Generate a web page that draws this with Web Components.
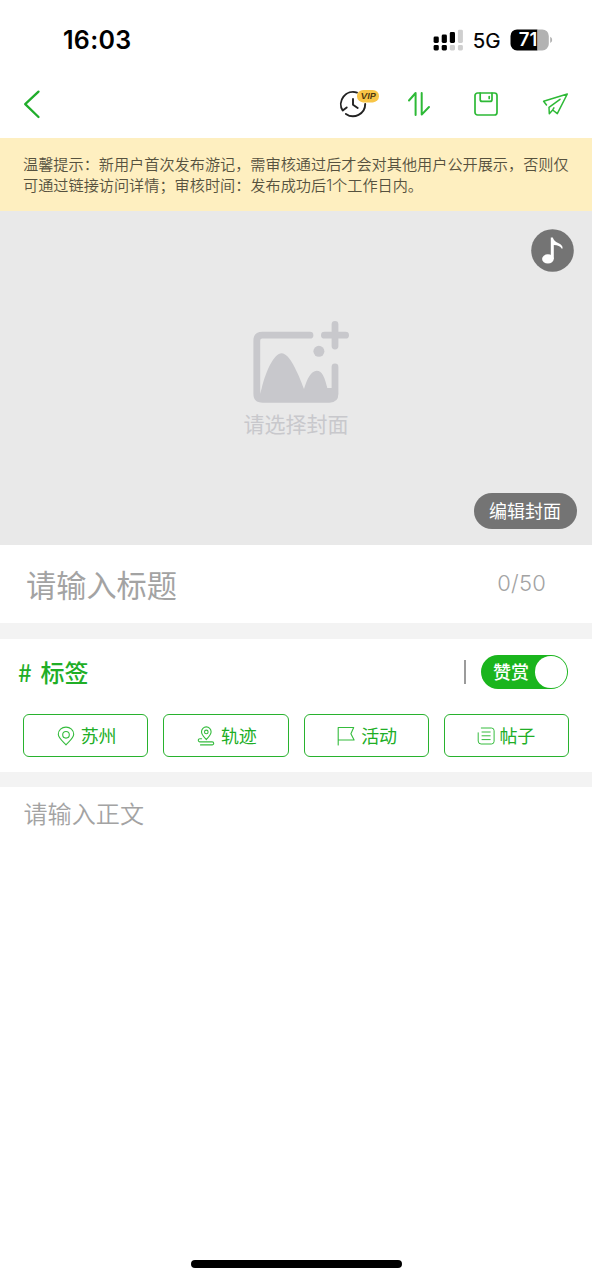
<!DOCTYPE html>
<html lang="zh-CN">
<head>
<meta charset="utf-8">
<title>发布游记</title>
<style>
html,body{margin:0;padding:0;background:#fff}
body{font-family:Inter,"Noto Sans CJK SC",sans-serif;color:#000}
</style>
</head>
<body>
<travel-editor></travel-editor>
<script>
const define = (name, html) => {
  const t = document.createElement('template');
  t.innerHTML = html;
  customElements.define(name, class extends HTMLElement {
    constructor() {
      super();
      this.attachShadow({mode: 'open'}).append(t.content.cloneNode(true));
    }
  });
};

const icons = {
  back: [18, 30, '<path d="M15.5 2.6 2.2 15.2l13.3 12.8" stroke="#20ad2b" stroke-width="2.3"/>'],
  history: [42, 34, `<g stroke="#222" stroke-width="1.9"><path d="M20 5.6A12.2 12.2 0 0 0 5.7 23.6l4-3.2"/><path d="M8.9 26.9A12.2 12.2 0 0 0 28.2 17"/><path d="M16 12v5.7l4.7 3.3"/></g>
    <rect x="20" y="3" width="22" height="12.4" rx="6.2" fill="#f8c547"/>
    <text x="31.2" y="12.2" text-anchor="middle" font-family="Inter,sans-serif" font-size="8" font-weight="600" font-style="italic" textLength="15.5" lengthAdjust="spacingAndGlyphs" fill="#49350e">VIP</text>`],
  sort: [24, 26, '<path d="M2 9.5 8.6 2v22M14.7 2v21.6L22 16" stroke="#2db936" stroke-width="2"/>'],
  save: [26, 26, '<g stroke="#2db936" stroke-width="1.7"><rect x="2" y="2" width="22" height="22" rx="2.6"/><path d="M7.2 2v6.4q0 2 2 2h7.8q2 0 2-2V2M16.2 5.5v2"/></g>'],
  send: [28, 26, '<path d="M4.5 14 1.6 10.3 25.3 3l-10 19.7-4.6-3.7-3.4 3.7-.3-6.4 11-8M10.7 19l1.2-2.2" stroke="#2db936" stroke-width="1.5"/>'],
  music: [43, 43, '<circle cx="21.5" cy="21.5" r="21.3" fill="#747474"/><ellipse cx="16.9" cy="29.9" rx="5.8" ry="4.6" fill="#fff"/><path d="M19.8 8.5h2q1.1 3.7 5.3 5.5 4.6 2 4.5 5.1-.2 1-1 .3-1.8-3.1-7.8-3.5v14.3h-3Z" fill="#fff"/>'],
  picture: [98, 86, `<g stroke="#c8c8cc" stroke-width="6.8"><path d="M58 17.2H10.3Q4.8 17.2 4.8 22.7v53.1q0 5.5 5.5 5.5h67.2q5.5 0 5.5-5.5V48.9"/><path d="M83 6.4V28M72.4 17.2h21.2"/></g>
    <circle cx="66.9" cy="33.3" r="5.5" fill="#c8c8cc"/><path d="M8 76 9.7 70.3C14 53 22 35.3 29.7 35.3S46 55 52 71c3-10 7-18.3 12.7-18.3S73 60 75.3 70H83V82H8Z" fill="#c8c8cc"/>`],
  pin: [18, 20, '<g stroke="#35bc3d" stroke-width="1.1"><path d="M9 18.8C5.8 15.4 1.3 12 1.3 8.3a7.7 7.2 0 0 1 15.4 0C16.7 12 12.2 15.4 9 18.8Z"/><circle cx="9" cy="8.8" r="3.3"/></g>'],
  track: [18, 20, '<g stroke="#35bc3d" stroke-width="1.1"><path d="M9.3 13.6C7.4 11.3 4.5 9 4.5 5.8a4.8 4.9 0 0 1 9.6 0c0 3.2-2.9 5.5-4.8 7.8Z"/><circle cx="9.3" cy="5.9" r="1.8"/><path d="M4.6 12.7H2.9a1.6 1.6 0 0 0 0 3.2h12.3a1.5 1.5 0 0 1 0 3H3.5"/></g>'],
  flag: [18, 20, '<path d="M1.2 19V1.5h15.5l-2.8 6.2 3.2 6.3H1.2" stroke="#35bc3d" stroke-width="1.1"/>'],
  post: [18, 20, '<g stroke="#35bc3d" stroke-width="1"><path d="M4.3 2h10.1q2.7 0 2.7 2.7v10.6q0 2.7-2.7 2.7H4.1Q1.2 18 1.2 15V6.8"/><path d="M5 6h8.2M5 9.8h8.2M5 13.6h8.2"/></g>'],
  signal: [31, 22, '<g fill="#000"><rect x=".6" y="7.5" width="5.2" height="6.5" rx="1.4"/><rect x="8.7" y="5.5" width="5.2" height="8.5" rx="1.4"/><rect x="16.8" y="3" width="5.2" height="11" rx="1.4"/><rect x=".6" y="16.1" width="5.2" height="5.4" rx="1.4"/><rect x="8.7" y="16.1" width="5.2" height="5.4" rx="1.4"/></g><g fill="#cfcfcf"><rect x="24.9" y=".7" width="5" height="13.3" rx="1.4"/><rect x="16.8" y="16.1" width="5.2" height="5.4" rx="1.4"/><rect x="24.9" y="16.1" width="5" height="5.4" rx="1.4"/></g>'],
  battery: [43, 22, `<path d="M27.5.4H7A6.5 6.5 0 0 0 .5 6.9v8A6.5 6.5 0 0 0 7 21.4h20.5Z" fill="#000"/><path d="M27.5.4h4.8a6.5 6.5 0 0 1 6.5 6.5v8a6.5 6.5 0 0 1-6.5 6.5h-4.8ZM40.2 7.8q2 1 2 3.1t-2 3.1Z" fill="#b2b2b2"/>
    <text x="8.8" y="17.4" font-family="Inter,sans-serif" font-size="18.5" font-weight="600" textLength="18.6" lengthAdjust="spacingAndGlyphs" fill="#fff">71</text>`]
};
customElements.define('ui-icon', class extends HTMLElement {
  connectedCallback() {
    if (this.shadowRoot) return;
    const [w, h, art] = icons[this.getAttribute('name')];
    this.attachShadow({mode: 'open'}).innerHTML =
      `<style>:host{display:block;flex:none;width:${w}px;height:${h}px}svg{display:block}</style>
       <svg width="${w}" height="${h}" viewBox="0 0 ${w} ${h}" fill="none" stroke-linecap="round" stroke-linejoin="round">${art}</svg>`;
  }
});

define('status-bar', `<style>
:host{display:flex;box-sizing:border-box;height:80px;padding:0 39.5px 0 63px;align-items:center;justify-content:space-between}
.time{font-size:25px;font-weight:600;line-height:30px;letter-spacing:.3px}
.right{display:flex;align-items:center}
.net{font-size:20.5px;line-height:24px;margin:1px 9px 0 9px;-webkit-text-stroke:.2px #000}
</style><span class="time">16:03</span><div class="right"><ui-icon name="signal"></ui-icon><span class="net">5G</span><ui-icon name="battery"></ui-icon></div>`);

define('nav-bar', `<style>
:host{display:flex;box-sizing:border-box;height:58px;padding:0 22px 10px 23px;align-items:center}
.tools{display:flex;align-items:center;margin-left:auto}
.sort{margin-left:28px}.save{margin-left:42px}.send{margin-left:43px}
</style><ui-icon name="back"></ui-icon><div class="tools"><ui-icon name="history"></ui-icon><ui-icon class="sort" name="sort"></ui-icon><ui-icon class="save" name="save"></ui-icon><ui-icon class="send" name="send"></ui-icon></div>`);

define('notice-bar', `<style>
:host{display:block;box-sizing:border-box;height:73px;padding:16px 20px 0 23px;background:#feefc0;color:#56523f;font-size:15.17px;font-weight:350;line-height:21.3px;white-space:nowrap}
</style><slot></slot>`);

define('cover-picker', `<style>
:host{display:flex;flex-direction:column;box-sizing:border-box;height:333.5px;padding:18px 18px 15.5px;background:#e9e9e9}
.music{align-self:flex-end}
.pick{display:flex;flex-direction:column;align-items:center;margin-top:46px;color:#c8c8cc;font-size:21px;font-weight:400;line-height:30px}
.pick ui-icon{margin-left:10px}
.pick span{margin-top:6px}
.edit{align-self:flex-end;box-sizing:border-box;margin:auto -2.5px 0 0;width:103px;height:36px;padding-top:1px;border-radius:18px;background:#747474;color:#fff;font-size:18px;line-height:36px;text-align:center}
</style><ui-icon class="music" name="music"></ui-icon><div class="pick"><ui-icon name="picture"></ui-icon><span>请选择封面</span></div><div class="edit">编辑封面</div>`);

define('title-field', `<style>
:host{display:flex;box-sizing:border-box;height:78.5px;padding:0 46px 0 26px;align-items:center;justify-content:space-between;color:#a3a3a3}
.ph{font-size:30.2px;font-weight:400;line-height:44px;margin-top:4px}
.count{font-size:22px;font-weight:300;line-height:28px;letter-spacing:.2px;margin-bottom:1px}
</style><span class="ph">请输入标题</span><span class="count">0/50</span>`);

define('section-gap', `<style>:host{display:block;height:16px;background:#f3f3f3}</style>`);

define('reward-switch', `<style>
:host{display:flex;box-sizing:border-box;width:87px;height:34px;border-radius:17px;padding:0 1.2px 0 12px;background:#1ab51d;align-items:center;justify-content:space-between;color:#fff;font-size:18px;font-weight:500;line-height:34px}
span{margin-top:2px}
i{width:31.5px;height:31.5px;border-radius:50%;background:#fff}
</style><span><slot></slot></span><i></i>`);

define('link-chip', `<style>
:host{display:flex;box-sizing:border-box;height:43px;border:1.5px solid #28b22e;border-radius:6px;align-items:center;justify-content:center;gap:6px;padding-left:2px;color:#20ae26;font-size:18px;font-weight:400;line-height:26px}
:host([tight]){gap:4px;padding-left:0}
span{margin-top:2px}
</style><slot name="icon"></slot><span><slot></slot></span>`);

define('tag-section', `<style>
:host{display:block;box-sizing:border-box;height:133px;padding:16px 23px 0}
.head{display:flex;align-items:center;height:34px;margin:0 1px 0 -5px;color:#20ae26}
.hash{font:500 24px/34px "Noto Sans CJK SC",sans-serif;width:22.5px}
.name{font-size:24px;font-weight:500;line-height:34px;margin-top:3px}
.bar{width:1.5px;height:24px;background:#9b9b9b;margin:0 15.5px 0 auto}
.chips{display:grid;grid-template-columns:repeat(4,1fr);gap:15px;margin-top:25px}
</style><div class="head"><span class="hash">#</span><span class="name">标签</span><span class="bar"></span><reward-switch>赞赏</reward-switch></div>
<div class="chips"><link-chip><ui-icon slot="icon" name="pin"></ui-icon>苏州</link-chip><link-chip><ui-icon slot="icon" name="track"></ui-icon>轨迹</link-chip><link-chip><ui-icon slot="icon" name="flag"></ui-icon>活动</link-chip><link-chip tight><ui-icon slot="icon" name="post"></ui-icon>帖子</link-chip></div>`);

define('body-field', `<style>
:host{display:block;box-sizing:border-box;padding:10px 23.5px;color:#a3a3a3;font-size:24.1px;font-weight:350;line-height:36px}
</style><slot></slot>`);

define('home-indicator', `<style>
:host{display:flex;height:20px;justify-content:center}
i{width:211px;height:8px;border-radius:4px;background:#000}
</style><i></i>`);

define('travel-editor', `<style>
:host{display:grid;grid-template-rows:repeat(8,auto) 1fr auto;grid-template-columns:592px;width:592px;height:1280px;overflow:hidden;background:#fff}
.last{height:15px}
</style>
<status-bar></status-bar><nav-bar></nav-bar>
<notice-bar>温馨提示：新用户首次发布游记，需审核通过后才会对其他用户公开展示，否则仅<br>可通过链接访问详情；审核时间：发布成功后1个工作日内。</notice-bar>
<cover-picker></cover-picker><title-field></title-field><section-gap></section-gap>
<tag-section></tag-section><section-gap class="last"></section-gap>
<body-field>请输入正文</body-field><home-indicator></home-indicator>`);
</script>
</body>
</html>
